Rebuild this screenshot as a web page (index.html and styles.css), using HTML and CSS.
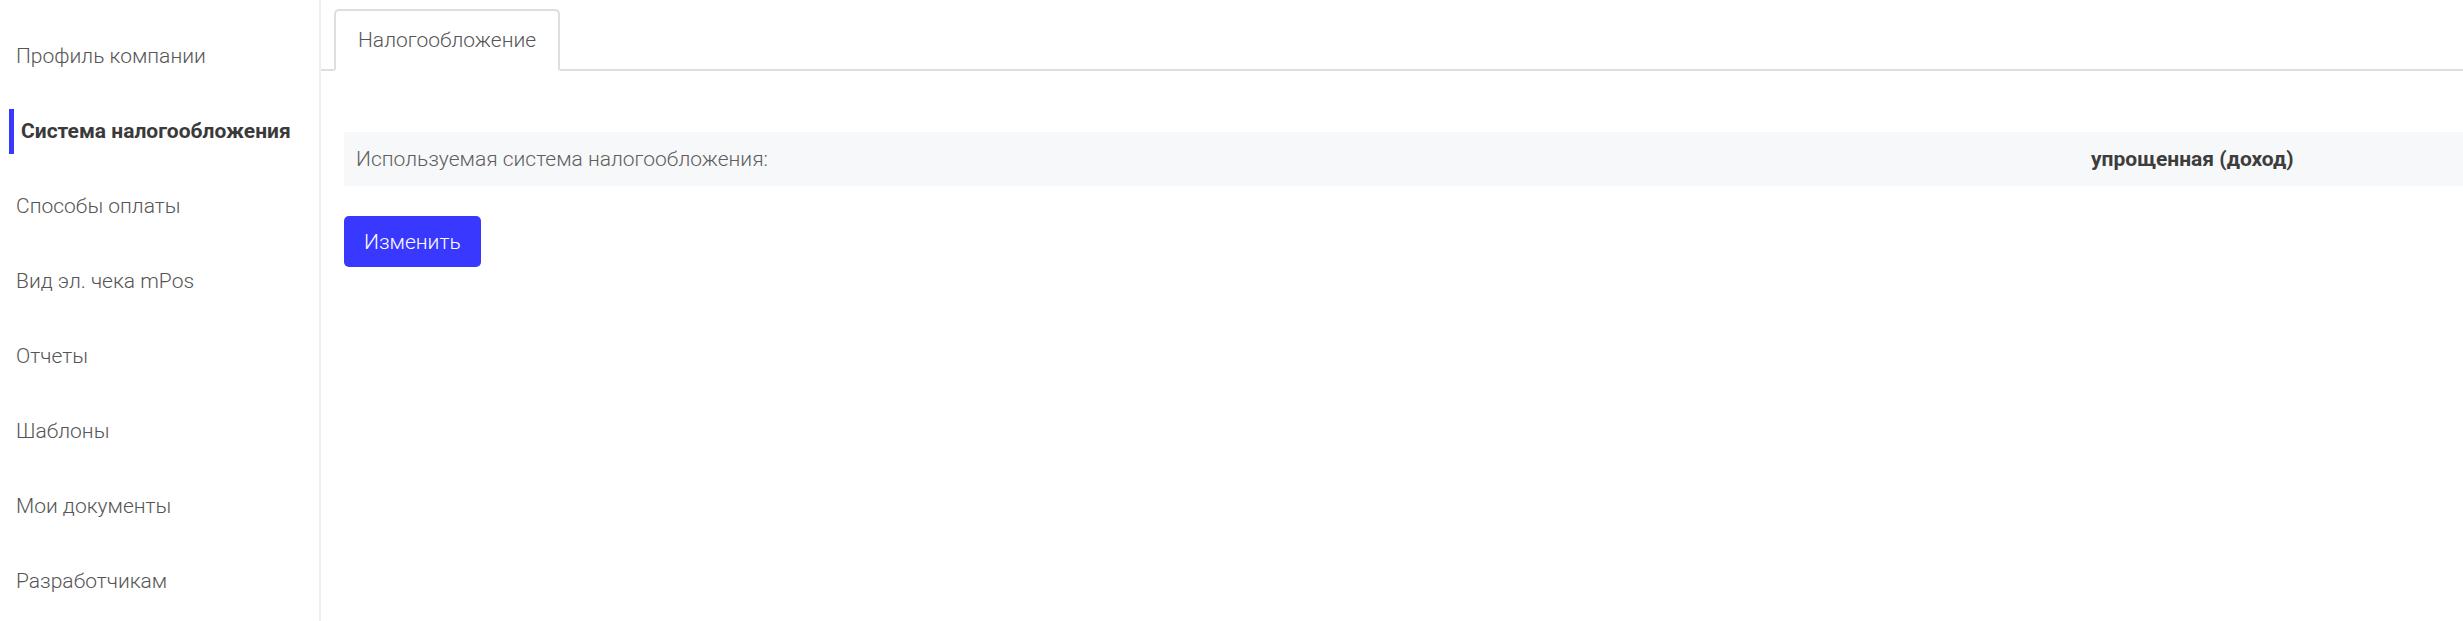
FILE: index.html
```html
<!DOCTYPE html>
<html lang="ru">
<head>
<meta charset="utf-8">
<title>Система налогообложения</title>
<link rel="stylesheet" href="styles.css">
</head>
<body>
<div class="layout">
  <aside class="sidebar">
    <nav class="menu">
      <a class="menu-item">Профиль компании</a>
      <a class="menu-item active">Система налогообложения</a>
      <a class="menu-item">Способы оплаты</a>
      <a class="menu-item">Вид эл. чека mPos</a>
      <a class="menu-item">Отчеты</a>
      <a class="menu-item">Шаблоны</a>
      <a class="menu-item">Мои документы</a>
      <a class="menu-item">Разработчикам</a>
    </nav>
  </aside>
  <main class="content">
    <div class="tabs">
      <div class="tab">Налогообложение</div>
    </div>
    <div class="panel">
      <div class="info-row">
        <div class="info-label">Используемая система налогообложения:</div>
        <div class="info-value">упрощенная (доход)</div>
      </div>
      <div class="actions">
        <button class="btn">Изменить</button>
      </div>
    </div>
  </main>
</div>
</body>
</html>
```
FILE: styles.css
```css
* { box-sizing: border-box; }
html, body { margin: 0; padding: 0; background: #fff; }
body {
  font-family: Roboto, "Liberation Sans", sans-serif;
  font-size: 21px;
  color: #555;
  overflow: hidden;
}
.layout {
  display: flex;
  min-height: 621px;
}
.sidebar {
  width: 321px;
  flex: 0 0 321px;
  border-right: 2px solid #eceef1;
  padding-top: 34px;
}
.menu {
  display: flex;
  flex-direction: column;
  gap: 30px;
}
.menu-item {
  display: block;
  height: 45px;
  line-height: 45px;
  margin-left: 9px;
  padding-left: 7px;
  font-weight: 300;
  color: #555;
  white-space: nowrap;
}
.menu-item.active {
  border-left: 5px solid #3838ff;
  font-weight: 700;
  color: #3a3a3a;
}
.content {
  flex: 1;
  min-width: 0;
}
.tabs {
  display: flex;
  padding: 9px 0 0 13px;
  border-bottom: 2px solid #dedede;
}
.tab {
  border: 2px solid #dedede;
  border-bottom-color: #fff;
  border-radius: 5px 5px 0 0;
  margin-bottom: -2px;
  padding: 14px 22px 13px;
  line-height: 31px;
  font-weight: 300;
  color: #555;
  background: #fff;
}
.panel {
  padding: 61px 0 0 23px;
}
.info-row {
  display: grid;
  grid-template-columns: 1735px 1fr;
  background: #f7f8fa;
  height: 54px;
  align-items: center;
}
.info-label {
  padding-left: 12px;
  font-weight: 300;
  color: #5e5e5e;
}
.info-value {
  padding-left: 12px;
  font-weight: 700;
  color: #3d3d3d;
}
.actions {
  padding-top: 30px;
}
.btn {
  font-family: inherit;
  font-size: 21px;
  font-weight: 300;
  color: #fff;
  background: #3838ff;
  border: 0;
  border-radius: 5px;
  height: 51px;
  padding: 0 20px;
  cursor: pointer;
}
```
